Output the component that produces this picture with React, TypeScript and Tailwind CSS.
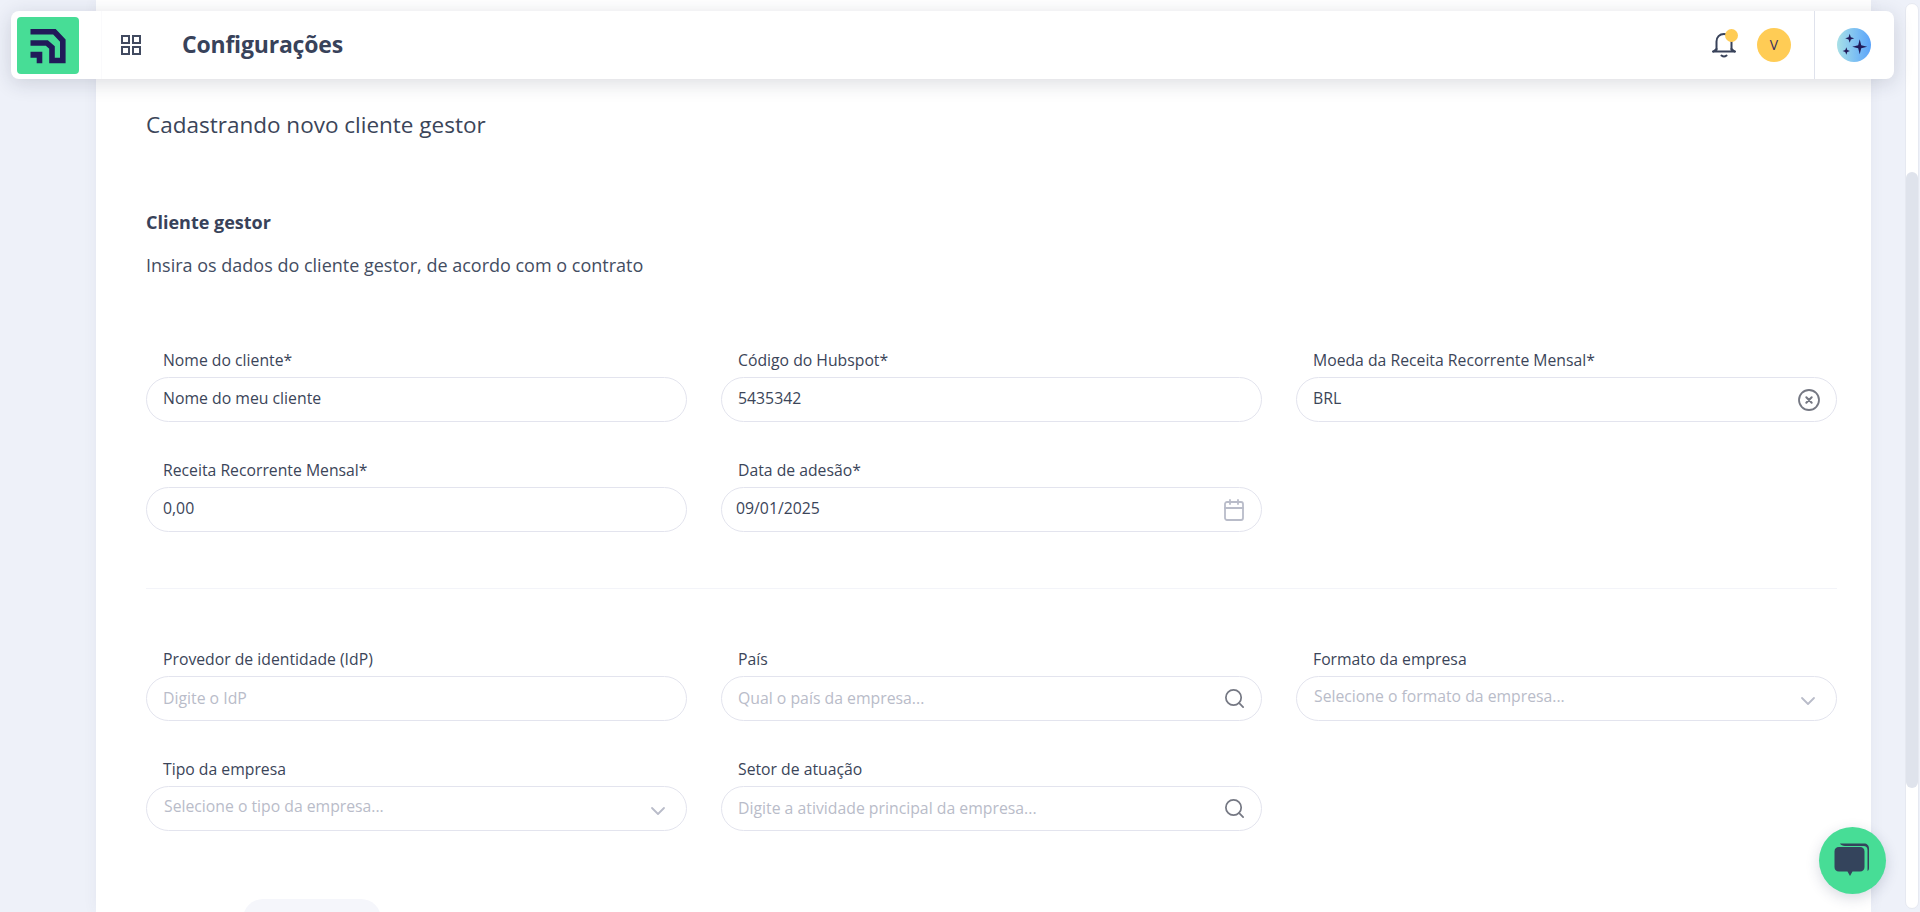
import { Calendar, ChevronDown, Search } from "lucide-react";
import type { ReactNode } from "react";

const font = "font-['Open_Sans','Noto_Sans',sans-serif]";

function Field({ label, children }: { label: string; children: ReactNode }) {
  return (
    <div className="flex flex-col">
      <label className="pl-[17px] text-[15.75px] leading-[22px] text-[#3b4559]">{label}</label>
      <div className="mt-[6px] flex h-[45px] items-center rounded-full border border-[#e3e4ee] bg-white pr-[15px] pl-[16px]">
        {children}
      </div>
    </div>
  );
}

function TextValue({ value, placeholder, className = "" }: { value?: string; placeholder?: string; className?: string }) {
  return (
    <input
      readOnly
      value={value ?? ""}
      placeholder={placeholder}
      className={`w-full min-w-0 flex-1 bg-transparent text-[15.8px] text-[#3b4559] outline-none placeholder:text-[#b9bcc9] ${value ? "pb-[2px]" : ""} ${className}`}
    />
  );
}

function SelectField({ label, placeholder }: { label: string; placeholder: string }) {
  return (
    <Field label={label}>
      <span className="ml-[1px] flex-1 pb-[3px] text-[15.75px] text-[#b9bcc9]">{placeholder}</span>
      <ChevronDown size={24} strokeWidth={1.8} className="mt-[4px] mr-[1px] text-[#b9bcc9]" />
    </Field>
  );
}

function SearchField({ label, placeholder }: { label: string; placeholder: string }) {
  return (
    <Field label={label}>
      <TextValue placeholder={placeholder} />
      <Search size={23} strokeWidth={1.8} className="text-[#757883]" />
    </Field>
  );
}

function ClearIcon() {
  return (
    <svg width="24" height="24" viewBox="0 0 24 24" fill="none" stroke="#757883" strokeWidth="1.8" strokeLinecap="round">
      <circle cx="12" cy="12" r="10" />
      <path d="M9.300 9.300l5.400 5.400M14.700 9.300l-5.400 5.400" strokeWidth="2" />
    </svg>
  );
}

function Logo() {
  return (
    <div className="flex h-[57px] w-[62px] items-center justify-center rounded-[4px] bg-[#47dd96]">
      <svg width="62" height="57" viewBox="17 16 62 57" fill="none" stroke="#211a59" strokeWidth="5.6">
        <path d="M30.500 30.800H54.500L62.800 39.600V59.500H52V46.500L46.800 42H30.500" />
        <path d="M30.500 50.700H42.300V62.300H36.700V56.700H30.500Z" fill="#211a59" stroke="none" />
      </svg>
    </div>
  );
}

function Bell() {
  return (
    <div className="relative h-[26px] w-[24px]">
      <svg width="24" height="26" viewBox="0 0 24 26" fill="none" stroke="#38425a" strokeWidth="2" strokeLinecap="round" strokeLinejoin="round">
        <path d="M4.500 18V9.500C4.500 5.200 7.500 2 12 2s7.500 3.200 7.500 7.500V18" />
        <path d="M1 19.500h22" />
        <path d="M4.500 17l-3 2.500M19.500 17l3 2.500" />
        <path d="M9.500 23.500c1.500 1.200 3.500 1.200 5 0" />
      </svg>
      <span className="absolute top-[-3px] right-[-2px] h-[13px] w-[13px] rounded-full bg-[#ffcc55]" />
    </div>
  );
}

function Sparkles() {
  return (
    <div className="flex h-[34px] w-[34px] items-center justify-center rounded-full bg-gradient-to-r from-[#a8e0e6] to-[#5aa3fa]">
      <svg width="34" height="34" viewBox="0 0 34 34" fill="#211a59">
        <path d="M22.700 11.200L24.200 17.200L30.200 18.700L24.200 20.200L22.700 26.200L21.200 20.200L15.200 18.700L21.200 17.200Z" />
        <path d="M12.700 5.800L13.800 9.200L17.200 10.300L13.800 11.400L12.700 14.800L11.600 11.400L8.200 10.300L11.600 9.200Z" />
        <path d="M9.300 19.300L10.300 22L13 23L10.300 24L9.300 26.700L8.300 24L5.600 23L8.300 22Z" />
      </svg>
    </div>
  );
}

function Header() {
  return (
    <header className="absolute top-[11px] left-[11px] z-10 flex h-[68px] w-[1883px] items-center rounded-[8px] bg-white pl-[6px] shadow-[0_4px_20px_rgba(30,35,60,0.16)]">
      <Logo />
      <div className="ml-[22px] h-full w-px bg-[#fafafc]" />
      <svg width="20" height="20" viewBox="0 0 20 20" fill="none" stroke="#414a60" strokeWidth="2" className="ml-[19px]">
        <rect x="1" y="1" width="7" height="7" />
        <rect x="12" y="1" width="7" height="7" />
        <rect x="1" y="12" width="7" height="7" />
        <rect x="12" y="12" width="7" height="7" />
      </svg>
      <h1 className="mb-[2px] ml-[41px] text-[23px] font-bold tracking-[-0.2px] text-[#38425a]">Configurações</h1>
      <div className="ml-auto flex h-full items-center">
        <Bell />
        <div className="ml-[21px] flex h-[34px] w-[34px] items-center justify-center rounded-full bg-[#ffcc55] text-sm text-[#38305f]">V</div>
        <div className="ml-[23px] h-full w-[1px] bg-[#dfe2ec]" />
        <div className="mr-[23px] ml-[22px]">
          <Sparkles />
        </div>
      </div>
    </header>
  );
}

export default function App() {
  return (
    <div className={`relative flex h-screen overflow-hidden bg-[#eef1f9] ${font}`}>
      <Header />
      <main className="ml-[96px] h-full w-[1775px] shrink-0 bg-white pt-[107px] pr-[34px] pl-[50px] shadow-[0_0_14px_rgba(60,70,110,0.06)]">
        <h2 className="text-[22.5px] leading-[36px] text-[#3b4559]">Cadastrando novo cliente gestor</h2>
        <h3 className="mt-[66px] text-lg leading-[26px] font-bold text-[#38425a]">Cliente gestor</h3>
        <p className="mt-[17px] text-lg leading-[26px] text-[#434d62]">Insira os dados do cliente gestor, de acordo com o contrato</p>

        <div className="mt-[71px] grid grid-cols-3 gap-x-[34px] gap-y-[37px]">
          <Field label="Nome do cliente*">
            <TextValue value="Nome do meu cliente" />
          </Field>
          <Field label="Código do Hubspot*">
            <TextValue value="5435342" />
          </Field>
          <Field label="Moeda da Receita Recorrente Mensal*">
            <TextValue value="BRL" />
            <ClearIcon />
          </Field>
          <Field label="Receita Recorrente Mensal*">
            <TextValue value="0,00" />
          </Field>
          <Field label="Data de adesão*">
            <TextValue value="09/01/2025" className="-ml-[2px]" />
            <Calendar size={24} strokeWidth={1.8} className="text-[#b9bcc9]" />
          </Field>
        </div>

        <hr className="mt-[56px] border-[#f3f4f9]" />

        <div className="mt-[59px] grid grid-cols-3 gap-x-[34px] gap-y-[37px]">
          <Field label="Provedor de identidade (IdP)">
            <TextValue placeholder="Digite o IdP" />
          </Field>
          <SearchField label="País" placeholder="Qual o país da empresa..." />
          <SelectField label="Formato da empresa" placeholder="Selecione o formato da empresa..." />
          <SelectField label="Tipo da empresa" placeholder="Selecione o tipo da empresa..." />
          <SearchField label="Setor de atuação" placeholder="Digite a atividade principal da empresa..." />
        </div>

        <div className="mt-[68px] ml-[97px] h-[50px] w-[138px] rounded-[20px] bg-[#f5f6fb]" />
      </main>

      <aside className="flex flex-1 justify-end py-[3px] pr-[1px]">
        <div className="h-full w-[14px] overflow-hidden rounded-full border border-[#e6e9f1] bg-white">
          <div className="mt-[168px] h-[616px] rounded-full bg-[#dfe3ec]" />
        </div>
      </aside>

      <button className="absolute top-[827px] left-[1819px] flex h-[67px] w-[67px] items-center justify-center rounded-full bg-[#47dd96] shadow-[0_4px_14px_rgba(40,50,90,0.18)]">
        <svg width="38" height="36" viewBox="0 0 38 36" fill="#34445c">
          <path d="M6 .5h24c3 0 5 2 5 5V25c0 1.500-.6 2.500-1.500 3V7c0-2.500-1.500-4-4-4H11C9 3 6.500 2 6 .5Z" />
          <path d="M5 4h21c2.800 0 4.500 1.700 4.500 4.500V24c0 2.800-1.700 4.500-4.500 4.500h-7.500L16 33l-2.500-4.500H5c-2.800 0-4.500-1.700-4.500-4.500V8.500C.5 5.700 2.200 4 5 4Z" />
        </svg>
      </button>
    </div>
  );
}
